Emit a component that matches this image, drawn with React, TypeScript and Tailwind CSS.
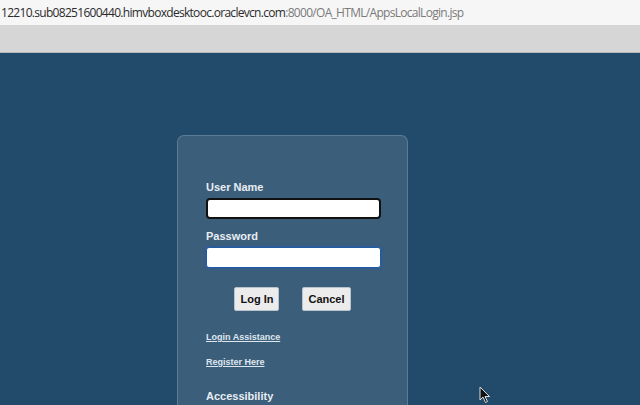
import { useState } from 'react';

function Cursor() {
  return (
    <svg width="12" height="18" viewBox="0 0 12 18" className="absolute left-[479px] top-[386px]" aria-hidden="true">
      <path d="M1 1 L1 14 L4 11 L6.5 16.5 L8.5 15.5 L6 10.5 L10.5 10.5 Z" fill="#111" stroke="#ddd" strokeWidth="1" />
    </svg>
  );
}

export default function App() {
  const [user, setUser] = useState('');
  const [password, setPassword] = useState('');

  return (
    <div className="relative flex h-[405px] w-[640px] flex-col overflow-hidden bg-[#224a6b] font-['Liberation_Sans',Arial,sans-serif]">
      <div className="flex h-[25px] shrink-0 items-center bg-[#f6f6f6] pl-[1px] text-[12px] tracking-[-0.7px] font-['Open_Sans',sans-serif]">
        <span className="text-[#2b2b2b]">12210.sub08251600440.himvboxdesktooc.oraclevcn.com</span>
        <span className="text-[#7a7a7a]">:8000/OA_HTML/AppsLocalLogin.jsp</span>
      </div>
      <div className="h-[28px] shrink-0 border-b border-[#b8b8b8] bg-[#d6d6d6]" />

      <main className="flex flex-1 pl-[177px] pt-[82px]">
        <section className="w-[231px] rounded-t-[7px] border border-b-0 border-[#5b7b96] bg-[#3b5e7b] px-[28px] pt-[45px]">
          <label className="block text-[11px] leading-[13px] font-bold text-[#e8edf2]">User Name</label>
          <input
            value={user}
            onChange={(e) => setUser(e.target.value)}
            className="mt-[4px] block h-[21px] w-[175px] rounded-[4px] border-2 border-[#111] bg-white outline-none"
          />
          <label className="mt-[11px] block text-[11px] leading-[13px] font-bold text-[#e8edf2]">Password</label>
          <input
            type="password"
            value={password}
            onChange={(e) => setPassword(e.target.value)}
            className="mt-[4px] block h-[21px] w-[175px] rounded-[3px] border border-[#1f5aa6] bg-white shadow-[0_0_2px_1px_rgba(40,90,170,0.6)] outline-none"
          />

          <div className="mt-[19px] flex justify-center gap-[23px]">
            <button className="h-[24px] rounded-[2px] border border-[#b9c3cc] bg-[#ececec] px-[5px] text-[11px] font-bold text-[#111]">
              Log In
            </button>
            <button className="h-[24px] rounded-[2px] border border-[#b9c3cc] bg-[#ececec] px-[5px] text-[11px] font-bold text-[#111]">
              Cancel
            </button>
          </div>

          <div className="mt-[21px] flex flex-col gap-[14px] text-[9px] leading-[11px] font-bold text-[#dfe6ee]">
            <a href="#" className="underline">Login Assistance</a>
            <a href="#" className="underline">Register Here</a>
          </div>

          <h2 className="mt-[22px] text-[11px] leading-[13px] font-bold text-[#e8edf2]">Accessibility</h2>
        </section>
      </main>

      <Cursor />
    </div>
  );
}
